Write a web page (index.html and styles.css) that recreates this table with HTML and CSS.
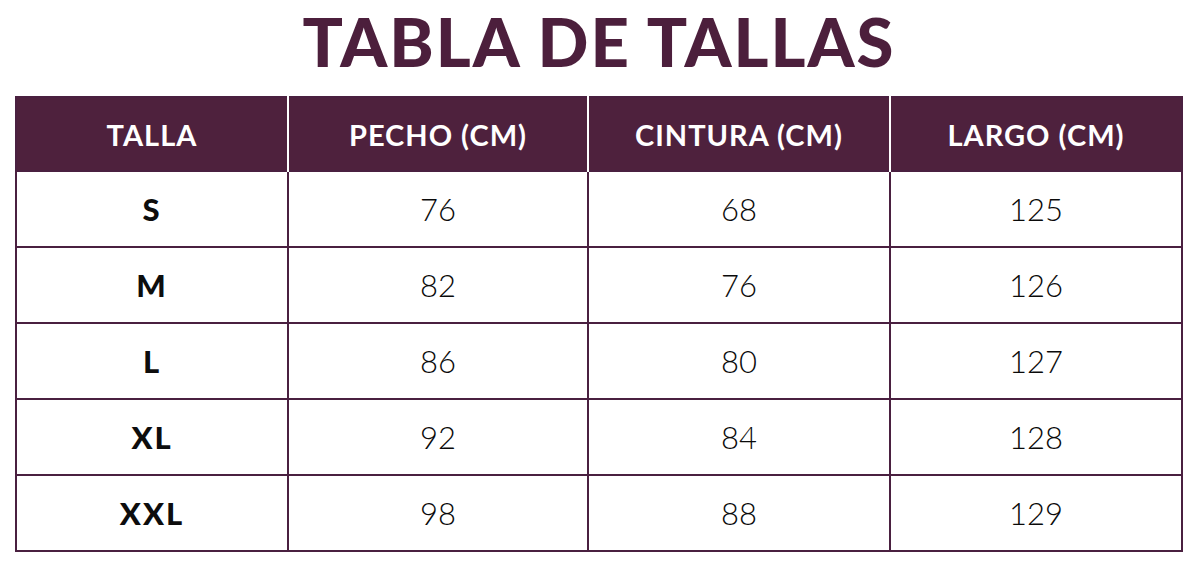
FILE: index.html
```html
<!DOCTYPE html>
<html lang="es">
<head>
<meta charset="utf-8">
<title>Tabla de tallas</title>
<link rel="stylesheet" href="styles.css">
</head>
<body>
<main class="page">
  <h1 class="title">TABLA DE TALLAS</h1>
  <table class="sizes">
    <colgroup>
      <col class="c1"><col class="c2"><col class="c3"><col class="c4">
    </colgroup>
    <thead>
      <tr><th>TALLA</th><th>PECHO (CM)</th><th>CINTURA (CM)</th><th>LARGO (CM)</th></tr>
    </thead>
    <tbody>
      <tr><td class="size">S</td><td>76</td><td>68</td><td>125</td></tr>
      <tr><td class="size">M</td><td>82</td><td>76</td><td>126</td></tr>
      <tr><td class="size">L</td><td>86</td><td>80</td><td>127</td></tr>
      <tr><td class="size">XL</td><td>92</td><td>84</td><td>128</td></tr>
      <tr><td class="size">XXL</td><td>98</td><td>88</td><td>129</td></tr>
    </tbody>
  </table>
</main>
</body>
</html>
```

FILE: styles.css
```css
html, body {
  margin: 0;
  padding: 0;
  background: #ffffff;
}
.page {
  padding: 0 17px 0 15px;
  font-family: Lato, "Open Sans", sans-serif;
}
.title {
  margin: 0;
  height: 96px;
  line-height: 82px;
  text-align: center;
  font-size: 67px;
  font-weight: 900;
  letter-spacing: 2px;
  color: #4c1f3c;
}
.sizes {
  width: 100%;
  border-collapse: collapse;
  table-layout: fixed;
  border: 2px solid #4a2040;
}
.c1 { width: 272px; }
.c2 { width: 300px; }
.c3 { width: 302px; }
.sizes th {
  height: 72px;
  background: #4e213d;
  color: #ffffff;
  font-size: 29px;
  font-weight: 700;
  letter-spacing: 1px;
  border-left: 2px solid #ffffff;
  padding: 0;
}
.sizes th:first-child { border-left: none; }
.sizes td {
  height: 74px;
  text-align: center;
  padding: 0;
  font-size: 31px;
  font-weight: 300;
  color: #0a0a0a;
  border: 2px solid #4a2040;
}
.sizes td.size {
  font-size: 31px;
  font-weight: 900;
  letter-spacing: 2px;
  color: #0d0d0d;
}
```
